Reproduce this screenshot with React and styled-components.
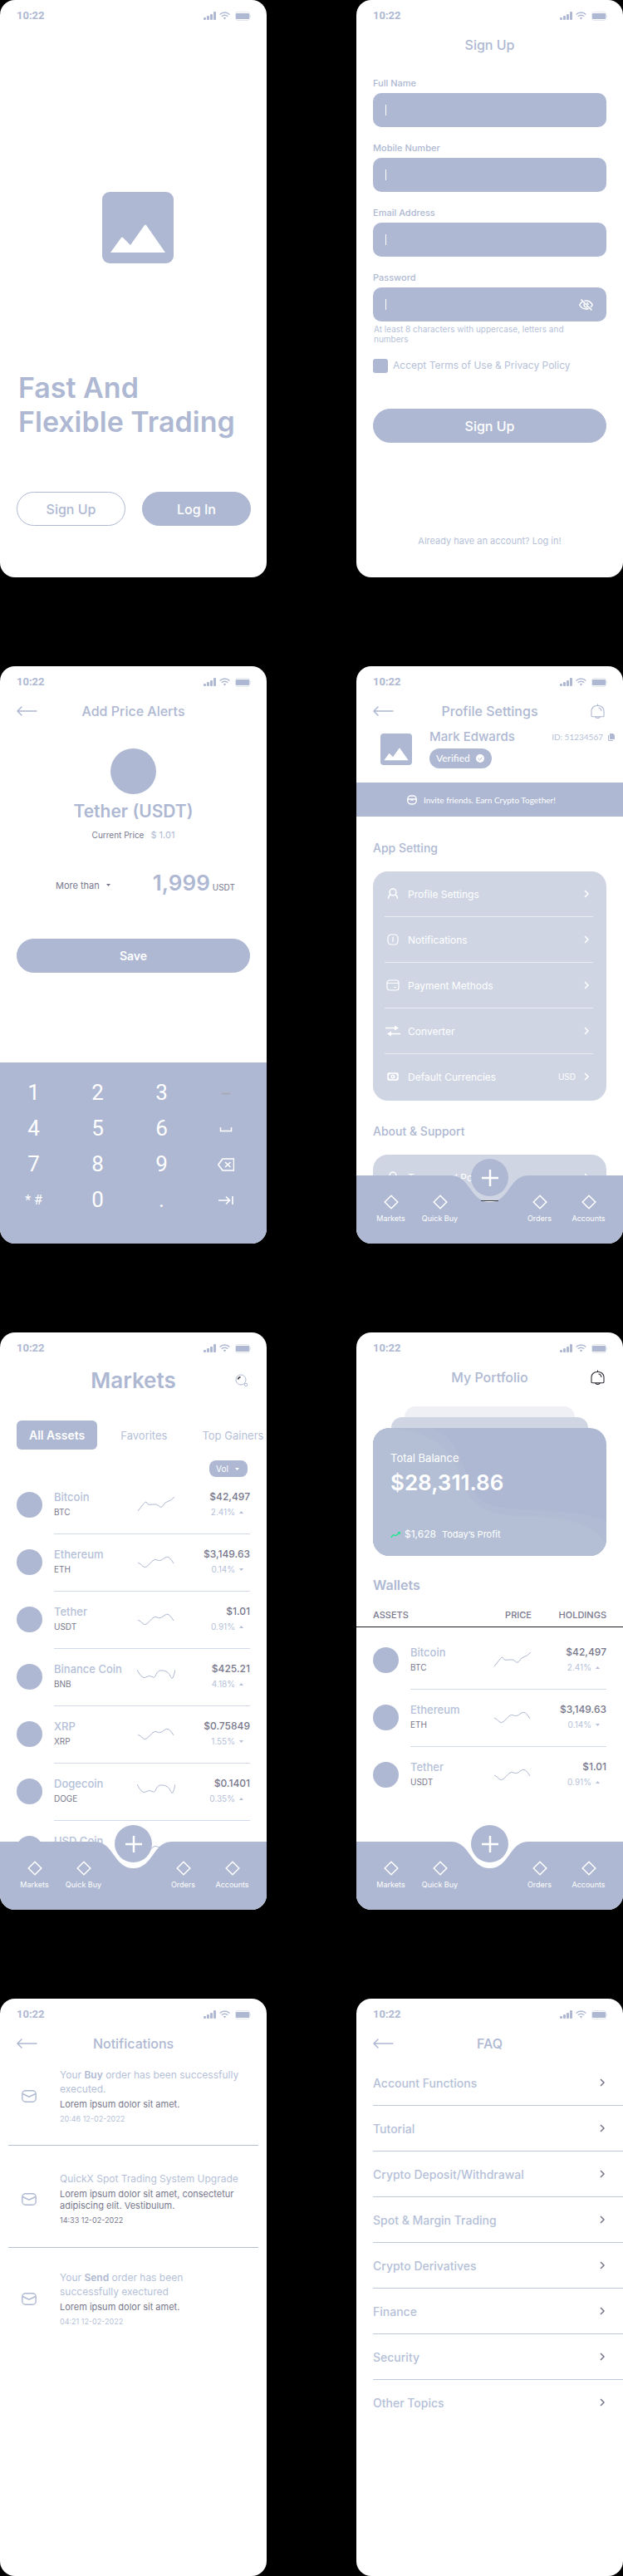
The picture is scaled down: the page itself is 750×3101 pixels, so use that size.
import React from "react";
import styled, { createGlobalStyle, ThemeProvider } from "styled-components";

const theme = {
  main: "#aeb8d2",
  soft: "#b5bfd8",
  panel: "#cfd5e3",
  line: "#d3d9e8",
  ink: "#77778c",
  paper: "#ffffff",
};

const GlobalStyle = createGlobalStyle`
  * { box-sizing: border-box; margin: 0; padding: 0; }
  body { background: #000; font-family: Inter, "Liberation Sans", sans-serif; color: ${theme.main}; }
  button, input, select { font: inherit; color: inherit; border: 0; background: none; }
  a { color: inherit; text-decoration: none; }
  ul { list-style: none; }
  svg { display: block; flex: none; }
`;

/* ---------- shared frame ---------- */

const Board = styled.main`
  display: grid;
  grid-template-columns: 1fr 1fr;
  gap: 107px 108px;
`;

const Phone = styled.section`
  position: relative;
  display: flex;
  flex-direction: column;
  min-width: 0;
  min-height: 695px;
  border-radius: 18px;
  overflow: hidden;
  background: ${(p) => p.theme.paper};
`;

const StatusRow = styled.div`
  display: flex;
  align-items: center;
  gap: 4px;
  height: 38px;
  padding: 0 18px 0 20px;
`;

const Clock = styled.time`
  margin-right: auto;
  font: 700 13px/16px Roboto, sans-serif;
`;

const Header = styled.header`
  display: grid;
  grid-template-columns: 40px 1fr 40px;
  align-items: center;
  height: 32px;
  padding: 0 20px;
`;

const Title = styled.h2`
  grid-column: 2;
  text-align: center;
  white-space: nowrap;
  font-size: ${(p) => (p.$large ? 26 : 16)}px;
  line-height: ${(p) => (p.$large ? 32 : 20)}px;
  font-weight: ${(p) => (p.$large ? 600 : 500)};
`;

const IconButton = styled.button`
  display: flex;
  justify-content: ${(p) => (p.$end ? "flex-end" : "flex-start")};
  color: ${(p) => (p.$dark ? "#2c2c34" : "inherit")};
  padding-right: ${(p) => (p.$end ? 2 : 0)}px;
`;

const Pill = styled.button`
  display: flex;
  align-items: center;
  justify-content: center;
  flex: ${(p) => (p.$share ? "1" : "none")};
  height: 41px;
  border-radius: 21px;
  border: 1px solid ${(p) => p.theme.main};
  background: ${(p) => (p.$outline ? "transparent" : p.theme.main)};
  color: ${(p) => (p.$outline ? p.theme.main : p.theme.paper)};
  font-size: ${(p) => (p.$strong ? 14 : 16)}px;
  font-weight: ${(p) => (p.$strong ? 600 : 500)};
`;

function StatusBar() {
  return (
    <StatusRow>
      <Clock>10:22</Clock>
      <svg width="15" height="10" viewBox="0 0 15 10" fill="currentColor">
        <rect x="0" y="7" width="3" height="3" rx="1" />
        <rect x="4" y="5" width="3" height="5" rx="1" />
        <rect x="8" y="3" width="3" height="7" rx="1" />
        <rect x="12" y="0" width="3" height="10" rx="1" />
      </svg>
      <svg width="13" height="10" viewBox="0 0 13 10" fill="none" stroke="currentColor" strokeWidth="1.4">
        <path d="M.6 3.4C4 .2 9 .2 12.4 3.4" />
        <path d="M2.7 5.8C5 3.8 8 3.8 10.3 5.8" />
        <path d="M4.8 7.4a2.6 2.6 0 0 1 3.4 0L6.5 9.6Z" fill="currentColor" stroke="none" />
      </svg>
      <svg width="22" height="11" viewBox="0 0 22 11">
        <rect x="2.5" y=".5" width="17" height="10" rx="2.5" fill="none" stroke="#e3e7f0" />
        <rect x="3" y="2" width="16" height="7" rx="1" fill="currentColor" />
        <path d="M20.5 4v3" stroke="#e3e7f0" />
      </svg>
    </StatusRow>
  );
}

function BackButton() {
  return (
    <IconButton type="button" aria-label="Back">
      <svg width="25" height="12" viewBox="0 0 25 12" fill="none" stroke="currentColor" strokeWidth="1.5" strokeLinecap="round" strokeLinejoin="round">
        <path d="M24 6H1M6 1 1 6l5 5" />
      </svg>
    </IconButton>
  );
}

function BellButton({ dark }) {
  return (
    <IconButton type="button" aria-label="Alerts" $end $dark={dark}>
      <svg width="17" height="18" viewBox="0 0 17 18" fill="none" stroke="currentColor" strokeWidth="1.1">
        <path d="M1 15V8.500a6.500 6.500 0 0 1 6.500-6h2A6.500 6.500 0 0 1 16 8.500V15q-.4.700-1.400.700H2.400Q1.400 15.700 1 15Z" />
        <path d="M8.500 2.500V.5M5.600 16q2.900 2.800 5.800 0" />
        <path d="M9.500 5q3 .2 3.500 4" />
      </svg>
    </IconButton>
  );
}

function Picture({ size }) {
  return (
    <svg width={size} height={size} viewBox="0 0 86 86" role="img" aria-label="Picture">
      <rect width="86" height="86" rx="9" fill={theme.main} />
      <path d="M10 73 23 55q1-1 2 0l9 9 17-24q1-1 2 0l23 33Z" fill="#fff" />
    </svg>
  );
}

function Chevron() {
  return (
    <svg width="7" height="10" viewBox="0 0 7 10" fill="none" stroke="currentColor" strokeWidth="1.500">
      <path d="m1 1 4 4-4 4" />
    </svg>
  );
}

function Caret({ up }) {
  return (
    <svg width="5" height="3" viewBox="0 0 5 3" fill="currentColor">
      <path d={up ? "M0 3 2.500 0 5 3Z" : "M0 0h5L2.500 3Z"} />
    </svg>
  );
}

/* ---------- welcome ---------- */

const WelcomeArt = styled.div`
  display: flex;
  justify-content: center;
  padding: 193px 0 129px 10px;
`;

const Slogan = styled.h1`
  padding: 0 0 0 22px;
  font-size: 34px;
  line-height: 41px;
  font-weight: 600;
  white-space: nowrap;
`;

const PillRow = styled.div`
  display: flex;
  gap: 20px;
  padding: 64px 19px 0 20px;
`;

function Welcome() {
  return (
    <Phone>
      <StatusBar />
      <WelcomeArt><Picture size={86} /></WelcomeArt>
      <Slogan>Fast And<br />Flexible Trading</Slogan>
      <PillRow>
        <Pill type="button" $outline $share>Sign Up</Pill>
        <Pill type="button" $share>Log In</Pill>
      </PillRow>
    </Phone>
  );
}

/* ---------- sign up ---------- */

const Form = styled.form`
  flex: 1;
  display: flex;
  flex-direction: column;
  padding: 22px 20px 36px;
`;

const FieldLabel = styled.label`
  font-size: 11px;
  line-height: 16px;
  font-weight: 500;
`;

const FieldBox = styled.div`
  display: flex;
  align-items: center;
  height: 41px;
  margin: 4px 0 17px;
  padding: 0 16px 0 15px;
  border-radius: 10px;
  background: ${(p) => p.theme.main};
  color: ${(p) => p.theme.paper};
`;

const TextCursor = styled.span`
  width: 1px;
  height: 13px;
  margin-right: 6px;
  background: currentColor;
`;

const FieldInput = styled.input`
  flex: 1;
  min-width: 0;
  outline: 0;
  font-size: 12px;
`;

const Hint = styled.p`
  margin-top: -14px;
  padding: 0 26px 0 1px;
  font-size: 10px;
  line-height: 12px;
  color: ${(p) => p.theme.soft};
`;

const Consent = styled.label`
  display: flex;
  align-items: center;
  gap: 6px;
  margin: 17px 0 43px;
  font-size: 12px;
  line-height: 18px;
  color: ${(p) => p.theme.soft};
`;

const Tick = styled.input`
  appearance: none;
  width: 18px;
  height: 17px;
  border-radius: 3px;
  background: ${(p) => p.theme.main};
`;

const FootNote = styled.p`
  margin-top: auto;
  text-align: center;
  font-size: 11px;
  line-height: 16px;
  color: ${(p) => p.theme.soft};
`;

const FIELDS = [
  { id: "full-name", label: "Full Name", type: "text" },
  { id: "mobile", label: "Mobile Number", type: "tel" },
  { id: "email", label: "Email Address", type: "email" },
  { id: "password", label: "Password", type: "password" },
];

function SignUp() {
  return (
    <Phone>
      <StatusBar />
      <Header><Title>Sign Up</Title></Header>
      <Form onSubmit={(e) => e.preventDefault()}>
        {FIELDS.map((f) => (
          <React.Fragment key={f.id}>
            <FieldLabel htmlFor={f.id}>{f.label}</FieldLabel>
            <FieldBox>
              <TextCursor />
              <FieldInput id={f.id} type={f.type} />
              {f.type === "password" && (
                <IconButton type="button" aria-label="Show password">
                  <svg width="17" height="16" viewBox="0 0 17 16" fill="none" stroke="currentColor" strokeWidth="1.500">
                    <path d="M4.500 4Q2 5.500.8 8q2.600 5 7.700 5 1.600 0 3-.5M6.500 3.200Q7.500 3 8.500 3q5 0 7.700 5-.8 1.700-2.200 2.900" />
                    <path d="M6.300 6.500a3 3 0 0 0 4 4M9 5.500A2.700 2.700 0 0 1 11.200 8M2.500 1.500l13 13" />
                  </svg>
                </IconButton>
              )}
            </FieldBox>
          </React.Fragment>
        ))}
        <Hint>At least 8 characters with uppercase, letters and numbers</Hint>
        <Consent>
          <Tick type="checkbox" />
          Accept Terms of Use &amp; Privacy Policy
        </Consent>
        <Pill type="submit">Sign Up</Pill>
        <FootNote>Already have an account? <a href="#login">Log in!</a></FootNote>
      </Form>
    </Phone>
  );
}

/* ---------- price alert ---------- */

const Coin = styled.span`
  display: block;
  width: ${(p) => p.$size}px;
  height: ${(p) => p.$size}px;
  border-radius: 50%;
  background: ${(p) => p.theme.main};
`;

const AlertAsset = styled.div`
  display: flex;
  flex-direction: column;
  align-items: center;
  padding-top: 29px;
`;

const AssetName = styled.h3`
  margin-top: 8px;
  font-size: 21px;
  line-height: 26px;
  font-weight: 600;
`;

const PriceNow = styled.p`
  display: flex;
  gap: 8px;
  margin-top: 7px;
  font-size: 10px;
  line-height: 16px;
  color: ${(p) => p.theme.ink};
`;

const PriceValue = styled.span`
  font-size: 11px;
  color: ${(p) => p.theme.main};
`;

const Condition = styled.div`
  display: flex;
  align-items: center;
  justify-content: space-between;
  padding: 32px 38px 44px 67px;
`;

const PickLabel = styled.label`
  display: flex;
  align-items: center;
  gap: 8px;
  font-size: 11px;
  color: ${(p) => p.theme.ink};
`;

const Pick = styled.select`
  appearance: none;
  outline: 0;
`;

const Amount = styled.p`
  display: flex;
  align-items: baseline;
  gap: 3px;
  font-size: 26px;
  line-height: 36px;
  font-weight: 600;
`;

const Unit = styled.span`
  font-size: 10px;
  font-weight: 400;
  color: ${(p) => p.theme.ink};
`;

const SaveArea = styled.div`
  display: grid;
  padding: 0 20px;
`;

const Keypad = styled.div`
  display: grid;
  grid-template-columns: repeat(4, 1fr);
  grid-auto-rows: 43px;
  margin-top: auto;
  padding: 15px 11px 31px 2px;
  background: ${(p) => p.theme.main};
  color: ${(p) => p.theme.paper};
`;

const Key = styled.button`
  display: flex;
  align-items: center;
  justify-content: center;
  font: 400 ${(p) => (p.$small ? 16 : 26)}px/43px Roboto, sans-serif;
`;

const SIGNS = {
  dash: <path d="M5 10.500h10" stroke="#a6a8ad" strokeWidth="1.500" />,
  space: <path d="M3.500 8v4.500h13V8" strokeWidth="1.500" />,
  erase: (
    <g strokeWidth="1.600">
      <path d="M6 3h13.500v14H6L.8 10Z" strokeLinejoin="round" />
      <path d="m9 7 6.500 6M15.500 7 9 13" />
    </g>
  ),
  next: <path d="M1 10h13M10 5.500l4.500 4.500-4.500 4.500M18 5v10" strokeWidth="1.600" />,
};

const KEYS = ["1", "2", "3", "dash", "4", "5", "6", "space", "7", "8", "9", "erase", "* #", "0", ".", "next"];

function PriceAlert() {
  return (
    <Phone>
      <StatusBar />
      <Header><BackButton /><Title>Add Price Alerts</Title></Header>
      <AlertAsset>
        <Coin $size={55} />
        <AssetName>Tether (USDT)</AssetName>
        <PriceNow>Current Price <PriceValue>$ 1.01</PriceValue></PriceNow>
      </AlertAsset>
      <Condition>
        <PickLabel>
          <Pick aria-label="Condition"><option>More than</option></Pick>
          <Caret />
        </PickLabel>
        <Amount>1,999<Unit>USDT</Unit></Amount>
      </Condition>
      <SaveArea><Pill type="button" $strong>Save</Pill></SaveArea>
      <Keypad>
        {KEYS.map((k) => (
          <Key key={k} type="button" $small={k === "* #"} aria-label={k}>
            {SIGNS[k] ? (
              <svg width="20" height="20" viewBox="0 0 20 20" fill="none" stroke="currentColor">{SIGNS[k]}</svg>
            ) : k}
          </Key>
        ))}
      </Keypad>
    </Phone>
  );
}

/* ---------- bottom navigation ---------- */

const NavBar = styled.nav`
  position: absolute;
  inset: auto 0 0;
  height: 82px;
  color: ${(p) => p.theme.paper};
`;

const NavShape = styled.div`
  display: flex;
  height: 82px;
`;

const NavSide = styled.div`
  flex: 1;
  background: ${(p) => p.theme.main};
`;

const NavItems = styled.div`
  position: absolute;
  inset: 0;
  display: grid;
  grid-template-columns: 59px 59px 1fr 59px 59px;
  padding: 23px 12px 0;
`;

const NavLink = styled.a`
  display: flex;
  flex-direction: column;
  align-items: center;
  gap: 5px;
  white-space: nowrap;
  font-size: 9px;
  line-height: 12px;
`;

const AddButton = styled.button`
  display: flex;
  align-items: center;
  justify-content: center;
  justify-self: center;
  width: 45px;
  height: 45px;
  margin-top: -43px;
  border-radius: 50%;
  background: ${(p) => p.theme.main};
`;

function NavItem({ name }) {
  return (
    <NavLink href="#">
      <svg width="18" height="18" viewBox="0 0 18 18" fill="none" stroke="currentColor" strokeWidth="1.500">
        <path d="M9 1.200 16.800 9 9 16.800 1.200 9Z" />
      </svg>
      {name}
    </NavLink>
  );
}

function BottomNav({ marked }) {
  return (
    <NavBar>
      <NavShape>
        <NavSide />
        <svg width="111" height="82" viewBox="0 0 111 82">
          <path d="M0 0H8C20 0 25 6 32 16C39 26 45 32 55.500 32S72 26 79 16C86 6 91 0 103 0H111V82H0Z" fill={theme.main} />
          {marked && <path d="M45 30.500h21" stroke="#3a3a42" />}
        </svg>
        <NavSide />
      </NavShape>
      <NavItems>
        <NavItem name="Markets" />
        <NavItem name="Quick Buy" />
        <AddButton type="button" aria-label="Add">
          <svg width="20" height="20" viewBox="0 0 20 20" stroke="currentColor" strokeWidth="2.500">
            <path d="M10 0v20M0 10h20" />
          </svg>
        </AddButton>
        <NavItem name="Orders" />
        <NavItem name="Accounts" />
      </NavItems>
    </NavBar>
  );
}

/* ---------- profile ---------- */

const Person = styled.div`
  display: flex;
  align-items: flex-start;
  gap: 21px;
  height: 70px;
  padding: 11px 10px 0 29px;
`;

const PersonText = styled.div`
  flex: 1;
  margin-top: -6px;
`;

const PersonTop = styled.div`
  display: flex;
  align-items: center;
  justify-content: space-between;
  white-space: nowrap;
`;

const PersonName = styled.h3`
  font-size: 15px;
  line-height: 20px;
  font-weight: 500;
`;

const PersonId = styled.p`
  display: flex;
  align-items: center;
  gap: 6px;
  font: 400 10px/14px Lato, sans-serif;
  color: ${(p) => p.theme.soft};
`;

const Verified = styled.span`
  display: inline-flex;
  align-items: center;
  gap: 6px;
  height: 24px;
  margin-top: 4px;
  padding: 0 6px 0 8px;
  border-radius: 12px;
  background: ${(p) => p.theme.main};
  color: ${(p) => p.theme.paper};
  font: 400 12px/16px Lato, sans-serif;
`;

const Invite = styled.a`
  display: flex;
  align-items: center;
  gap: 8px;
  height: 41px;
  padding-left: 61px;
  background: ${(p) => p.theme.main};
  color: ${(p) => p.theme.paper};
  font: 400 10px/14px Lato, sans-serif;
`;

const Section = styled.section`
  padding: ${(p) => (p.$first ? 28 : 27)}px 20px 0;
`;

const SectionTitle = styled.h3`
  font-size: 14px;
  line-height: 20px;
  font-weight: 500;
`;

const MenuCard = styled.ul`
  margin-top: 18px;
  padding: 0 16px 2px 14px;
  border-radius: 18px;
  background: ${(p) => p.theme.panel};
  color: ${(p) => p.theme.paper};
`;

const MenuRow = styled.li`
  & + & { border-top: 1px solid #e9edf4; }
`;

const MenuLink = styled.a`
  display: grid;
  grid-template-columns: 20px 1fr auto 7px;
  align-items: center;
  gap: 8px;
  height: 54px;
  padding: 0 4px 0 0;
  font-size: 12px;
`;

const MenuValue = styled.span`
  font-size: 10px;
  padding-right: 2px;
`;

const MENU = [
  { name: "Profile Settings", icon: <g><circle cx="10" cy="8" r="4" /><path d="M4.500 16q0-4 3-5M15.500 16q0-4-3-5" /></g> },
  { name: "Notifications", icon: <g strokeWidth="1.200"><rect x="4" y="4" width="12" height="12" rx="4" /><path d="M10 7v6" /></g> },
  { name: "Payment Methods", icon: <g strokeWidth="1.200"><rect x="3" y="4" width="14" height="12" rx="3" /><path d="M3 7.500h14M11 12.500h3" /></g> },
  { name: "Converter", icon: <g><path d="M1 6.500h13M6 13.500h13" /><path d="M12 3.500 17 6.500l-5 3ZM8 10.500 3 13.500l5 3Z" fill="currentColor" stroke="none" /></g> },
  { name: "Default Currencies", value: "USD", icon: <g><rect x="4" y="6" width="12" height="8" rx="1" /><circle cx="10" cy="10" r="1.800" /><path d="M4 8.500 6.500 6M16 8.500 13.500 6M4 11.500 6.500 14M16 11.500 13.500 14" /></g> },
];

const ABOUT = [{ name: "Terms and Policies", icon: MENU[0].icon }];

function Menu({ items }) {
  return (
    <MenuCard>
      {items.map((m) => (
        <MenuRow key={m.name}>
          <MenuLink href="#">
            <svg width="20" height="20" viewBox="0 0 20 20" fill="none" stroke="currentColor" strokeWidth="1.500">{m.icon}</svg>
            <span>{m.name}</span>
            <MenuValue>{m.value}</MenuValue>
            <Chevron />
          </MenuLink>
        </MenuRow>
      ))}
    </MenuCard>
  );
}

function Profile() {
  return (
    <Phone>
      <StatusBar />
      <Header><BackButton /><Title>Profile Settings</Title><BellButton /></Header>
      <Person>
        <Picture size={38} />
        <PersonText>
          <PersonTop>
            <PersonName>Mark Edwards</PersonName>
            <PersonId>
              ID: 51234567
              <svg width="8" height="9" viewBox="0 0 8 9" fill={theme.main}>
                <path d="M2 0h4l2 2v5H2Z" />
                <path d="M.5 2v6.500H6" fill="none" stroke={theme.main} />
              </svg>
            </PersonId>
          </PersonTop>
          <Verified>
            Verified
            <svg width="14" height="10" viewBox="0 0 14 10">
              <circle cx="6" cy="5" r="5" fill="#fff" />
              <path d="m3.500 5 2 1.800L8.500 3.500" fill="none" stroke={theme.main} />
            </svg>
          </Verified>
        </PersonText>
      </Person>
      <Invite href="#">
        <svg width="12" height="12" viewBox="0 0 12 12" fill="none" stroke="currentColor" strokeWidth="1.400">
          <rect x=".8" y="1" width="10.400" height="10" rx="4" />
          <path d="M1 5h10M4.500 6h3" />
        </svg>
        Invite friends. Earn Crypto Together!
      </Invite>
      <Section $first>
        <SectionTitle>App Setting</SectionTitle>
        <Menu items={MENU} />
      </Section>
      <Section>
        <SectionTitle>About &amp; Support</SectionTitle>
        <Menu items={ABOUT} />
      </Section>
      <BottomNav marked />
    </Phone>
  );
}

/* ---------- coin table ---------- */

const CoinTable = styled.table`
  display: block;
  white-space: nowrap;
`;

const Group = styled.tbody`
  display: block;
`;

const HeadGroup = styled.thead`
  display: block;
  border-bottom: 1px solid #1c1c22;
  margin-bottom: ${(p) => p.$after}px;
`;

const Row = styled.tr`
  display: grid;
  grid-template-columns: 45px 100px 46px 1fr;
  padding: 0 20px;
`;

const HeadCell = styled.th`
  grid-column: ${(p) => p.$col};
  text-align: ${(p) => (p.$end ? "right" : "left")};
  font-size: 11px;
  line-height: 28px;
  font-weight: 500;
  color: ${(p) => p.theme.ink};
`;

const Cell = styled.td`
  display: flex;
  flex-direction: column;
  justify-content: center;
  align-items: ${(p) => (p.$end ? "flex-end" : "flex-start")};
  height: 69px;
  padding-bottom: 2px;
  border-bottom: 1px solid ${(p) => (p.$ruled ? p.theme.line : "transparent")};
`;

const CoinName = styled.span`
  font-size: 13px;
  line-height: 18px;
  font-weight: 500;
  color: ${(p) => p.theme.soft};
`;

const Ticker = styled.span`
  font-size: 10px;
  line-height: 18px;
  color: ${(p) => p.theme.ink};
`;

const Price = styled.span`
  font-size: 12px;
  line-height: 18px;
  font-weight: 500;
  color: ${(p) => p.theme.ink};
`;

const Change = styled.span`
  display: flex;
  align-items: center;
  gap: 5px;
  padding-right: 8px;
  font-size: 10px;
  line-height: 18px;
  color: ${(p) => p.theme.soft};
`;

const CoinDot = styled(Coin)`
  display: flex;
  justify-content: center;
  padding-top: 8px;
`;

const WAVES = {
  rise: [[1, 17], [8, 8], [11, 5], [13, 10], [24, 8], [29, 14], [34, 6], [40, 5], [45, 0]],
  climb: [[1, 10], [5, 12], [9, 17], [15, 12], [21, 5], [28, 9], [38, 0], [44, 11]],
  swing: [[0, 1], [6, 13], [15, 7], [21, 12], [25, 1], [38, 3], [43, 16], [46, 1]],
};

function smooth(points) {
  const mids = points.slice(1, -1).map(([x, y], i) => {
    const [nx, ny] = points[i + 2];
    const last = i === points.length - 3;
    return `Q${x} ${y} ${last ? nx : (x + nx) / 2} ${last ? ny : (y + ny) / 2}`;
  });
  return `M${points[0].join(" ")}${mids.join("")}`;
}

const COINS = [
  { name: "Bitcoin", code: "BTC", price: "$42,497", change: "2.41%", up: true, wave: "rise" },
  { name: "Ethereum", code: "ETH", price: "$3,149.63", change: "0.14%", up: false, wave: "climb" },
  { name: "Tether", code: "USDT", price: "$1.01", change: "0.91%", up: true, wave: "climb" },
  { name: "Binance Coin", code: "BNB", price: "$425.21", change: "4.18%", up: true, wave: "swing" },
  { name: "XRP", code: "XRP", price: "$0.75849", change: "1.55%", up: false, wave: "climb" },
  { name: "Dogecoin", code: "DOGE", price: "$0.1401", change: "0.35%", up: true, wave: "swing" },
  { name: "USD Coin", wave: "climb", last: true },
];

function CoinRow({ coin, ruled }) {
  return (
    <Row>
      <Cell>
        <CoinDot $size={31}>
          {coin.last && <svg width="2" height="2"><rect width="2" height="2" fill="#d8515f" /></svg>}
        </CoinDot>
      </Cell>
      <Cell $ruled={ruled}><CoinName>{coin.name}</CoinName><Ticker>{coin.code || "\u00a0"}</Ticker></Cell>
      <Cell $ruled={ruled}>
        <svg width="46" height="18" viewBox="0 0 46 18" fill="none" stroke={theme.main} strokeWidth="1">
          <path d={smooth(WAVES[coin.wave])} />
        </svg>
      </Cell>
      <Cell $ruled={ruled} $end>
        {coin.price && (
          <>
            <Price>{coin.price}</Price>
            <Change>{coin.change}<Caret up={coin.up} /></Change>
          </>
        )}
      </Cell>
    </Row>
  );
}

/* ---------- markets ---------- */

const MarketHeader = styled(Header)`
  height: 40px;
`;

const Tabs = styled.div`
  display: flex;
  align-items: center;
  margin-top: 28px;
  padding-left: 20px;
  white-space: nowrap;
`;

const Tab = styled.button`
  height: 35px;
  padding: 0 ${(p) => (p.$active ? 15 : 14)}px;
  border-radius: 6px;
  font-size: ${(p) => (p.$active ? 14 : 13)}px;
  font-weight: ${(p) => (p.$active ? 600 : 400)};
  background: ${(p) => (p.$active ? p.theme.main : "transparent")};
  color: ${(p) => (p.$active ? p.theme.paper : p.theme.soft)};
  & + & { margin-left: 14px; }
`;

const FilterRow = styled.div`
  display: flex;
  justify-content: flex-end;
  padding: 13px 23px 0 0;
`;

const Filter = styled.label`
  display: flex;
  align-items: center;
  gap: 8px;
  height: 20px;
  padding: 0 10px 0 8px;
  border-radius: 8px;
  background: ${(p) => p.theme.main};
  color: ${(p) => p.theme.paper};
  font-size: 10px;
`;

function Markets() {
  return (
    <Phone>
      <StatusBar />
      <MarketHeader>
        <Title $large>Markets</Title>
        <IconButton type="button" aria-label="Search" $end>
          <svg width="16" height="16" viewBox="0 0 16 16" fill="none" stroke="currentColor">
            <circle cx="7" cy="7" r="6" />
            <circle cx="13" cy="13" r="1.800" />
            <path d="M3.500 6.500Q4 4 6.500 3.800" stroke="#2c2c34" strokeWidth="1.500" />
          </svg>
        </IconButton>
      </MarketHeader>
      <Tabs>
        <Tab type="button" $active>All Assets</Tab>
        <Tab type="button">Favorites</Tab>
        <Tab type="button">Top Gainers</Tab>
      </Tabs>
      <FilterRow>
        <Filter>
          <Pick aria-label="Sort by"><option>Vol</option></Pick>
          <Caret />
        </Filter>
      </FilterRow>
      <CoinTable>
        <Group>{COINS.map((c) => <CoinRow key={c.name} coin={c} ruled={!c.last} />)}</Group>
      </CoinTable>
      <BottomNav />
    </Phone>
  );
}

/* ---------- portfolio ---------- */

const Stack = styled.div`
  display: flex;
  flex-direction: column;
  align-items: center;
  padding: 19px 20px 0;
`;

const StackEdge = styled.div`
  align-self: stretch;
  height: 13px;
  margin: 0 ${(p) => p.$inset}px;
  border-radius: 16px 16px 0 0;
  background: ${(p) => (p.$near ? p.theme.panel : "#eff0f6")};
`;

const Balance = styled.div`
  position: relative;
  align-self: stretch;
  height: 154px;
  padding: 26px 21px 0;
  border-radius: 20px;
  overflow: hidden;
  background: ${(p) => p.theme.main};
  color: ${(p) => p.theme.paper};
`;

const BalanceWave = styled.svg`
  position: absolute;
  inset: 0;
  width: 100%;
  height: 100%;
`;

const BalanceText = styled.div`
  position: relative;
`;

const BalanceLabel = styled.p`
  font-size: 13px;
  line-height: 20px;
`;

const BalanceValue = styled.p`
  margin-top: 3px;
  font-size: 26px;
  line-height: 34px;
  font-weight: 600;
`;

const Profit = styled.p`
  display: flex;
  align-items: center;
  gap: 4px;
  margin-top: 36px;
  font-size: 12px;
  line-height: 18px;
`;

const ProfitNote = styled.span`
  margin-left: 3px;
  font-size: 11px;
`;

const WalletTitle = styled.h3`
  padding: 24px 20px 11px;
  font-size: 16px;
  line-height: 22px;
  font-weight: 600;
`;

function Portfolio() {
  return (
    <Phone>
      <StatusBar />
      <Header><Title>My Portfolio</Title><BellButton dark /></Header>
      <Stack>
        <StackEdge $inset={38} />
        <StackEdge $inset={22} $near />
        <Balance>
          <BalanceWave viewBox="0 0 281 154" preserveAspectRatio="none">
            <path d="M0 0H70C104 10 108 50 119 72 134 100 160 96 200 99 236 101 262 104 281 112V154H0Z" fill="#b1bbd3" />
            <path d="M0 0H22C80 6 98 32 108 66 120 100 150 106 180 106 224 106 262 112 281 140V154H0Z" fill="#b4bfd5" />
          </BalanceWave>
          <BalanceText>
            <BalanceLabel>Total Balance</BalanceLabel>
            <BalanceValue>$28,311.86</BalanceValue>
            <Profit>
              <svg width="13" height="9" viewBox="0 0 13 9" fill="none" stroke="#1fe78e" strokeWidth="1.500">
                <path d="M1 8Q3 4 4.500 5t3 0L11 2" />
                <path d="M8.500 1H12v3.500Z" fill="#1fe78e" stroke="none" />
              </svg>
              $1,628 <ProfitNote>Today’s Profit</ProfitNote>
            </Profit>
          </BalanceText>
        </Balance>
      </Stack>
      <WalletTitle>Wallets</WalletTitle>
      <CoinTable>
        <HeadGroup $after={6}>
          <Row>
            <HeadCell $col="1 / 3">ASSETS</HeadCell>
            <HeadCell $col="3" $end>PRICE</HeadCell>
            <HeadCell $col="4" $end>HOLDINGS</HeadCell>
          </Row>
        </HeadGroup>
        <Group>{COINS.slice(0, 3).map((c, i) => <CoinRow key={c.name} coin={c} ruled={i < 2} />)}</Group>
      </CoinTable>
      <BottomNav />
    </Phone>
  );
}

/* ---------- notifications ---------- */

const Feed = styled.ul`
  padding: 0 10px;
`;

const Note = styled.li`
  display: grid;
  grid-template-columns: 46px 1fr;
  align-items: center;
  padding: ${(p) => p.$top}px 10px ${(p) => p.$bottom}px 16px;
  & + & { border-top: 1px solid ${(p) => p.theme.soft}; }
`;

const NoteTitle = styled.h3`
  font-size: 12px;
  line-height: 17px;
  font-weight: 400;
  color: ${(p) => p.theme.soft};
`;

const Strong = styled.strong`
  font-weight: 600;
  color: ${(p) => p.theme.main};
`;

const NoteBody = styled.p`
  margin-top: 3px;
  font-size: 11px;
  line-height: 14px;
  color: ${(p) => p.theme.ink};
`;

const NoteTime = styled.time`
  display: block;
  margin-top: 4px;
  font-size: 9px;
  line-height: 14px;
  color: ${(p) => (p.$dark ? p.theme.ink : p.theme.soft)};
`;

const NOTES = [
  { top: 13, bottom: 24, title: <>Your <Strong>Buy</Strong> order has been successfully<br />executed.</>, body: "Lorem ipsum dolor sit amet.", time: "20:46 12-02-2022" },
  { top: 31, bottom: 25, title: "QuickX Spot Trading System Upgrade", body: <>Lorem ipsum dolor sit amet, consectetur<br />adipiscing elit. Vestibulum.</>, time: "14:33 12-02-2022", dark: true },
  { top: 27, bottom: 24, title: <>Your <Strong>Send</Strong> order has been<br />successfully exectured</>, body: "Lorem ipsum dolor sit amet.", time: "04:21 12-02-2022" },
];

function Notifications() {
  return (
    <Phone>
      <StatusBar />
      <Header><BackButton /><Title>Notifications</Title></Header>
      <Feed>
        {NOTES.map((n) => (
          <Note key={n.time} $top={n.top} $bottom={n.bottom}>
            <svg width="18" height="15" viewBox="0 0 18 15" fill="none" stroke="currentColor" strokeWidth="1.400">
              <rect x=".8" y=".8" width="16.400" height="13.400" rx="4" />
              <path d="M1.200 4.500 9 8.200l7.800-3.700" />
            </svg>
            <div>
              <NoteTitle>{n.title}</NoteTitle>
              <NoteBody>{n.body}</NoteBody>
              <NoteTime $dark={n.dark}>{n.time}</NoteTime>
            </div>
          </Note>
        ))}
      </Feed>
    </Phone>
  );
}

/* ---------- faq ---------- */

const Topics = styled.ul`
  padding: 4px 0 0 20px;
`;

const Topic = styled.li`
  & + & { border-top: 1px solid #c0c8dc; }
`;

const TopicLink = styled.a`
  display: flex;
  align-items: center;
  justify-content: space-between;
  height: 54px;
  padding-right: 21px;
  font-size: 14px;
  font-weight: 500;
  color: ${(p) => p.theme.soft};
`;

const TopicMark = styled.span`
  color: ${(p) => p.theme.ink};
`;

const TOPICS = [
  "Account Functions", "Tutorial", "Crypto Deposit/Withdrawal", "Spot & Margin Trading",
  "Crypto Derivatives", "Finance", "Security", "Other Topics",
];

function Faq() {
  return (
    <Phone>
      <StatusBar />
      <Header><BackButton /><Title>FAQ</Title></Header>
      <Topics>
        {TOPICS.map((t) => (
          <Topic key={t}>
            <TopicLink href="#">{t}<TopicMark><Chevron /></TopicMark></TopicLink>
          </Topic>
        ))}
      </Topics>
    </Phone>
  );
}

export default function App() {
  return (
    <ThemeProvider theme={theme}>
      <GlobalStyle />
      <Board>
        <Welcome />
        <SignUp />
        <PriceAlert />
        <Profile />
        <Markets />
        <Portfolio />
        <Notifications />
        <Faq />
      </Board>
    </ThemeProvider>
  );
}
